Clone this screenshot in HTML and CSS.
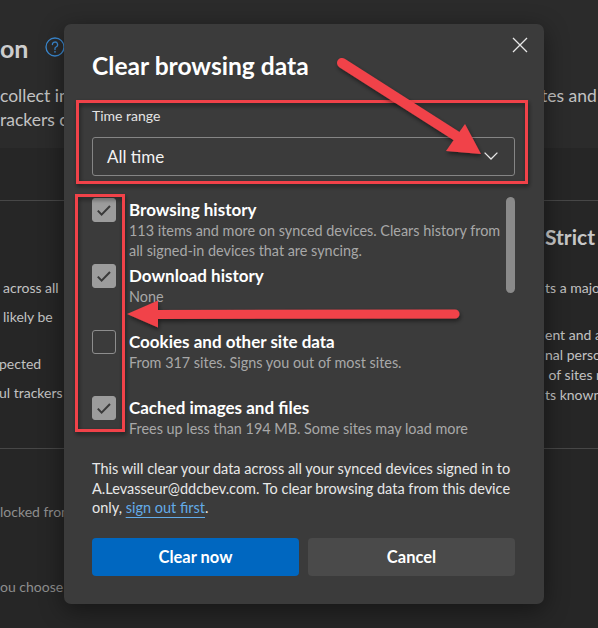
FILE: index.html
```html
<!DOCTYPE html>
<html lang="en">
<head>
<meta charset="utf-8">
<title>Clear browsing data</title>
<link rel="stylesheet" href="styles.css">
</head>
<body>
<div class="page">
  <section class="hero">
    <div class="hero-title">
      <span class="h1">on</span>
      <svg class="help" width="20" height="20" viewBox="0 0 20 20" aria-hidden="true">
        <circle cx="10" cy="10" r="9" fill="none" stroke="#3b8ad3" stroke-width="1.3"/>
        <path d="M7.4 7.6a2.6 2.6 0 1 1 3.6 2.4c-.7.3-1 .8-1 1.5v1.1" fill="none" stroke="#3b8ad3" stroke-width="1.3" stroke-linecap="round"/>
        <circle cx="10" cy="14.8" r=".85" fill="#3b8ad3"/>
      </svg>
    </div>
    <div class="split first">
      <span class="bg-text">collect information about</span>
      <span class="bg-text right-col">tes and</span>
    </div>
    <div class="split">
      <span class="bg-text">rackers collect</span>
    </div>
  </section>
  <div class="spacer"></div>
  <section class="cards">
    <div class="col-left">
      <p class="bg-text m77">across all</p>
      <p class="bg-text m9">likely be</p>
      <p class="bg-text m27 flush">pected</p>
      <p class="bg-text m9 flush">ul trackers</p>
    </div>
    <div class="col-right">
      <p class="card-title">Strict</p>
      <p class="bg-text m27">ts a major</p>
      <p class="bg-text m27">ent and a</p>
      <p class="bg-text">nal person</p>
      <p class="bg-text">&nbsp;of sites m</p>
      <p class="bg-text">ts known</p>
    </div>
  </section>
  <section class="lower">
    <p class="bg-text dim m53">locked from</p>
    <p class="bg-text dim m55">ou choose</p>
    <p class="bg-title">Always use “Strict” tracking prevention when browsing InPrivate</p>
  </section>
</div>

<div class="dialog" role="dialog" aria-label="Clear browsing data">
  <div class="dlg-head">
    <h2 class="dlg-title">Clear browsing data</h2>
    <button class="close" aria-label="Close">
      <svg width="16" height="16" viewBox="0 0 16 16"><path d="M1 1L15 15M15 1L1 15" stroke="#e8e8e8" stroke-width="1.3" fill="none"/></svg>
    </button>
  </div>

  <div class="field-label">Time range</div>
  <div class="select">
    <span>All time</span>
    <svg width="14" height="8" viewBox="0 0 14 8"><path d="M0.6 0.6L7 7L13.4 0.6" stroke="#e8e8e8" stroke-width="1.3" fill="none"/></svg>
  </div>

  <div class="list">
    <div class="items">
      <div class="item">
        <span class="cb checked"><svg width="24" height="24" viewBox="0 0 24 24"><path d="M5.8 12.6L9.6 16.6L18 8" stroke="#393939" stroke-width="2" fill="none"/></svg></span>
        <div class="item-text">
          <div class="item-title">Browsing history</div>
          <div class="item-desc">113 items and more on synced devices. Clears history from<br>all signed-in devices that are syncing.</div>
        </div>
      </div>
      <div class="item">
        <span class="cb checked"><svg width="24" height="24" viewBox="0 0 24 24"><path d="M5.8 12.6L9.6 16.6L18 8" stroke="#393939" stroke-width="2" fill="none"/></svg></span>
        <div class="item-text">
          <div class="item-title">Download history</div>
          <div class="item-desc">None</div>
        </div>
      </div>
      <div class="item">
        <span class="cb"></span>
        <div class="item-text">
          <div class="item-title">Cookies and other site data</div>
          <div class="item-desc">From 317 sites. Signs you out of most sites.</div>
        </div>
      </div>
      <div class="item">
        <span class="cb checked"><svg width="24" height="24" viewBox="0 0 24 24"><path d="M5.8 12.6L9.6 16.6L18 8" stroke="#393939" stroke-width="2" fill="none"/></svg></span>
        <div class="item-text">
          <div class="item-title">Cached images and files</div>
          <div class="item-desc">Frees up less than 194 MB. Some sites may load more<br>slowly on your next visit.</div>
        </div>
      </div>
    </div>
    <div class="track"><div class="thumb"></div></div>
  </div>

  <p class="note">This will clear your data across all your synced devices signed in to<br>A.Levasseur@ddcbev.com. To clear browsing data from this device<br>only, <a href="#" class="link">sign out first</a>.</p>

  <div class="actions">
    <button class="btn primary">Clear now</button>
    <button class="btn secondary">Cancel</button>
  </div>
</div>

<svg class="annot" width="598" height="628" viewBox="0 0 598 628" aria-hidden="true">
  <defs>
    <filter id="sh" x="-10%" y="-10%" width="130%" height="130%">
      <feDropShadow dx="1" dy="2.5" stdDeviation="2" flood-color="#000" flood-opacity="0.5"/>
    </filter>
  </defs>
  <g filter="url(#sh)" fill="none" stroke="#f1434a" stroke-width="3">
    <rect x="77.5" y="101.5" width="449" height="81"/>
    <rect x="76.5" y="195.5" width="47" height="235"/>
  </g>
  <g filter="url(#sh)" fill="#f1434a">
    <line x1="342" y1="63" x2="458" y2="137" stroke="#f1434a" stroke-width="10" stroke-linecap="round"/>
    <polygon points="465,124 446,151 481,154"/>
    <line x1="455" y1="314" x2="152" y2="314.5" stroke="#f1434a" stroke-width="9" stroke-linecap="round"/>
    <polygon points="127,314 158,300.5 158,327.5"/>
  </g>
</svg>
</body>
</html>
```

FILE: styles.css
```css
html, body {
  margin: 0;
  padding: 0;
}
body {
  width: 598px;
  height: 628px;
  overflow: hidden;
  position: relative;
  background: #262626;
  font-family: Lato, "Segoe UI", "Open Sans", sans-serif;
  color: #e6e6e6;
}

/* ---------- background settings page ---------- */
.page {
  width: 598px;
}
.hero {
  height: 148px;
  background: #2b2b2b;
  padding-top: 32px;
  box-sizing: border-box;
}
.hero-title {
  display: flex;
  align-items: center;
  height: 32px;
  gap: 17px;
}
.h1 {
  font-size: 25px;
  font-weight: 700;
  color: #cdcdcd;
  line-height: 32px;
}
.help {
  display: block;
  margin-top: -2px;
}
.split {
  display: flex;
  justify-content: space-between;
  height: 24px;
}
.split.first {
  margin-top: 20px;
}
.bg-text {
  margin: 0;
  white-space: nowrap;
  font-size: 14px;
  line-height: 20px;
  color: #c2c2c2;
}
.split .bg-text {
  font-size: 17.5px;
  line-height: 24px;
}
.right-col {
  width: 57px;
  overflow: hidden;
}
.spacer {
  height: 53px;
  box-sizing: border-box;
  border-bottom: 1px solid #474747;
}
.cards {
  height: 248px;
  box-sizing: border-box;
  border-bottom: 1px solid #474747;
  display: flex;
  justify-content: space-between;
}
.col-left {
  padding-left: 3px;
}
.col-left .flush {
  margin-left: -4px;
}
.col-right {
  width: 53px;
  overflow: hidden;
}
.card-title {
  margin: 22px 0 0;
  font-size: 21px;
  font-weight: 700;
  line-height: 28px;
  color: #c8c8c8;
  white-space: nowrap;
}
.m77 { margin-top: 77px; }
.m9 { margin-top: 9px; }
.m27 { margin-top: 27px; }
.m53 { margin-top: 53px; }
.m55 { margin-top: 55px; }
.dim { color: #8e8e8e; }
.bg-title {
  margin: 31px 0 0 8px;
  font-size: 17px;
  font-weight: 700;
  line-height: 24px;
  color: #c8c8c8;
  white-space: nowrap;
}

/* ---------- dialog ---------- */
.dialog {
  position: absolute;
  left: 64px;
  top: 24px;
  width: 480px;
  height: 580px;
  box-sizing: border-box;
  padding: 25px 29px 28px 28px;
  background: #3b3b3b;
  border-radius: 7px;
  box-shadow: 0 6px 24px rgba(0, 0, 0, 0.45);
}
.dlg-head {
  display: flex;
  justify-content: space-between;
  align-items: flex-start;
}
.dlg-title {
  margin: 0;
  font-size: 24.6px;
  font-weight: 700;
  line-height: 34px;
  color: #ffffff;
}
.close {
  width: 16px;
  height: 16px;
  padding: 0;
  margin: -12px -13px 0 0;
  border: 0;
  background: transparent;
}
.close svg { display: block; }

.field-label {
  margin-top: 23px;
  font-size: 14px;
  line-height: 20px;
  color: #e4e4e4;
}
.select {
  margin-top: 11px;
  height: 39px;
  box-sizing: border-box;
  border: 1px solid #858585;
  border-radius: 3px;
  display: flex;
  align-items: center;
  justify-content: space-between;
  padding: 0 16px 0 14px;
  font-size: 17px;
  color: #f2f2f2;
}
.select svg { display: block; margin-top: -1px; }

.list {
  margin-top: 20px;
  height: 242px;
  overflow: hidden;
  display: flex;
}
.items {
  flex: 1;
  padding-top: 3px;
}
.item {
  display: flex;
  align-items: flex-start;
  gap: 13px;
  min-height: 61px;
  margin-bottom: 5px;
}
.cb {
  flex: none;
  width: 24px;
  height: 24px;
  box-sizing: border-box;
  border: 1px solid #8d8d8d;
  border-radius: 3px;
  margin-top: -1px;
}
.cb.checked {
  background: #9c9c9c;
  border-color: #9c9c9c;
}
.cb svg {
  display: block;
  margin: -1px;
}
.item-title {
  font-size: 17px;
  font-weight: 700;
  line-height: 22px;
  color: #ffffff;
  white-space: nowrap;
}
.item-desc {
  font-size: 14.4px;
  line-height: 19.5px;
  color: #a8a8a8;
  white-space: nowrap;
}
.track {
  width: 9px;
  flex: none;
}
.thumb {
  margin-top: 1px;
  height: 96px;
  border-radius: 5px;
  background: #8a8a8a;
}

.note {
  margin: 21px 0 0;
  font-size: 14.5px;
  line-height: 19.5px;
  color: #e8e8e8;
  white-space: nowrap;
}
.link {
  color: #63abe8;
  text-decoration: underline;
  text-underline-offset: 4px;
  text-decoration-thickness: 1px;
}

.actions {
  margin-top: 20px;
  display: grid;
  grid-template-columns: 207px 207px;
  justify-content: space-between;
}
.btn {
  height: 38px;
  border: 0;
  border-radius: 4px;
  font-family: inherit;
  font-size: 16.5px;
  font-weight: 700;
  color: #ffffff;
}
.btn.primary { background: #0067c0; }
.btn.secondary { background: #4a4a4a; }

/* ---------- annotation overlay ---------- */
.annot {
  position: absolute;
  left: 0;
  top: 0;
  pointer-events: none;
}
```
